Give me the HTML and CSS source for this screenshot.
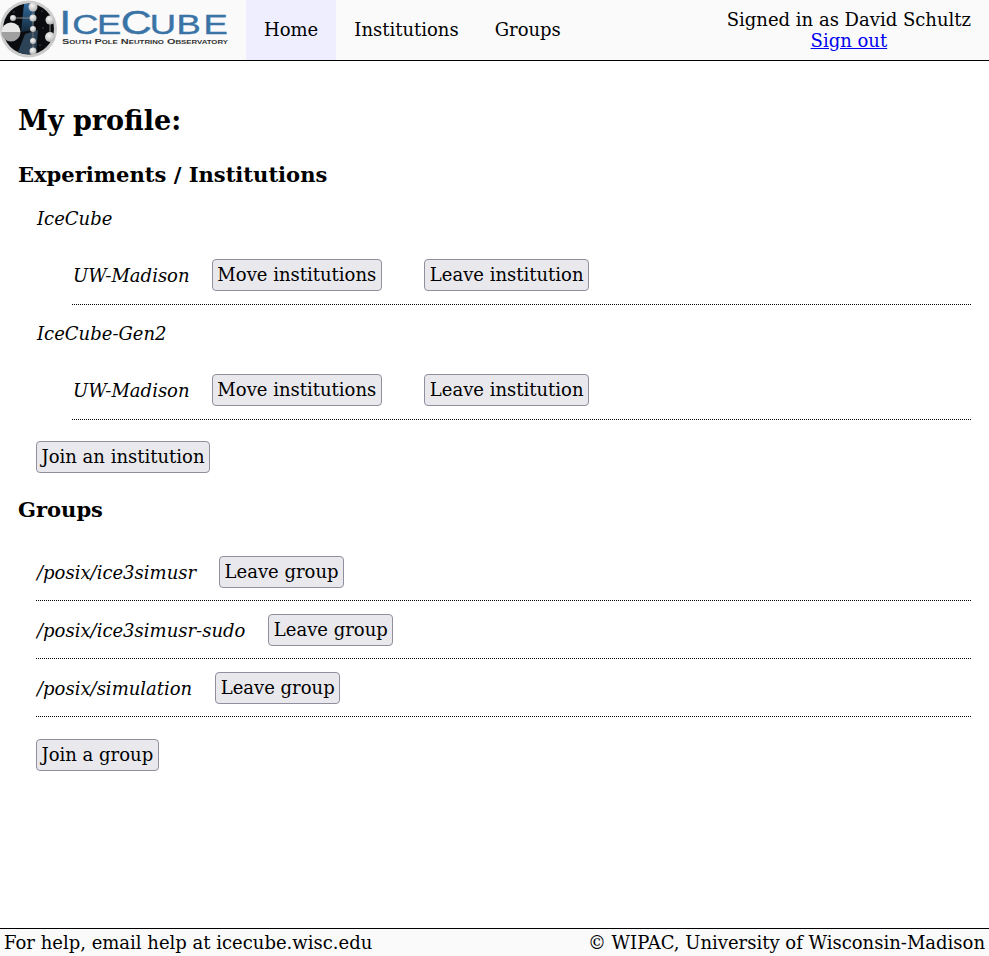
FILE: index.html
```html
<!DOCTYPE html>
<html lang="en">
<head>
    <meta charset="UTF-8">
    <meta name="viewport" content="width=device-width, initial-scale=1.0">
    <title>My profile</title>
    <link rel="stylesheet" href="styles.css">
</head>
<body>
    <header class="header">
        <div class="logo">
            <svg width="230" height="60" viewBox="0 0 230 60">
                <defs>
                    <radialGradient id="ball" cx="40%" cy="35%" r="70%">
                        <stop offset="0" stop-color="#f6f6f6"/>
                        <stop offset="1" stop-color="#b0b0b0"/>
                    </radialGradient>
                    <linearGradient id="streak" x1="0" y1="0" x2="0" y2="1">
                        <stop offset="0" stop-color="#2f6a9c"/>
                        <stop offset="1" stop-color="#14283a"/>
                    </linearGradient>
                </defs>
                <circle cx="28.500" cy="29" r="28.500" fill="#cccccc"/>
                <circle cx="28.500" cy="29" r="25.500" fill="#0a0c10"/>
                <path d="M24 4 L36 4 L33 30 L21 32Z" fill="url(#streak)"/>
                <path d="M18 52 L25 34 L38 30 L36 53 A25 25 0 0 1 18 52Z" fill="#2c4256"/>
                <g fill="#6f8aa3">
                    <circle cx="14" cy="12" r="0.600"/>
                    <circle cx="42" cy="11" r="0.600"/>
                    <circle cx="43" cy="28" r="0.600"/>
                    <circle cx="40" cy="45" r="0.600"/>
                    <circle cx="46" cy="47" r="0.600"/>
                    <circle cx="18" cy="26" r="0.600"/>
                </g>
                <path d="M33 4 L33 54" stroke="#777" stroke-width="1"/>
                <path d="M13 18 L33 18 M50 20 L50 37" stroke="#888" stroke-width="1"/>
                <circle cx="33" cy="7" r="4.500" fill="url(#ball)"/>
                <circle cx="33" cy="18" r="3.500" fill="url(#ball)"/>
                <circle cx="33" cy="29" r="3" fill="url(#ball)"/>
                <circle cx="33" cy="41" r="3" fill="url(#ball)"/>
                <circle cx="33" cy="51" r="3.500" fill="url(#ball)"/>
                <circle cx="50" cy="20" r="4.500" fill="url(#ball)"/>
                <circle cx="50" cy="37" r="5" fill="url(#ball)"/>
                <circle cx="13" cy="18" r="3" fill="url(#ball)"/>
                <path d="M1.500 32 A9.500 9.500 0 0 1 20.500 32Z" fill="#e8e8e8"/>
                <path d="M1.500 32 A9.500 9.500 0 0 0 20.500 32Z" fill="#a0a0a0"/>
                <g transform="scale(1.3 1)">
                    <text class="logo-title" x="45.500 55.500 74.600 92.900 115.200 135.800 156.500" y="34"><tspan class="logo-cap">I</tspan>CE<tspan class="logo-cap">C</tspan>UBE</text>
                </g>
                <text class="logo-sub" x="62" y="44" textLength="166" lengthAdjust="spacingAndGlyphs">South Pole Neutrino Observatory</text>
            </svg>
        </div>
        <nav class="nav">
            <a class="nav-item active" href="#">Home</a>
            <a class="nav-item" href="#">Institutions</a>
            <a class="nav-item" href="#">Groups</a>
        </nav>
        <div class="account">
            <div>Signed in as David Schultz</div>
            <a href="#">Sign out</a>
        </div>
    </header>

    <main class="content">
        <h1>My profile:</h1>

        <h2>Experiments / Institutions</h2>
        <div class="experiment">
            <div class="experiment-name">IceCube</div>
            <div class="row inst-row">
                <span class="name">UW-Madison</span>
                <button class="button">Move institutions</button>
                <button class="button leave">Leave institution</button>
            </div>
        </div>
        <div class="experiment">
            <div class="experiment-name">IceCube-Gen2</div>
            <div class="row inst-row">
                <span class="name">UW-Madison</span>
                <button class="button">Move institutions</button>
                <button class="button leave">Leave institution</button>
            </div>
        </div>
        <div class="join"><button class="button">Join an institution</button></div>

        <h2 class="groups-title">Groups</h2>
        <div class="groups">
            <div class="row">
                <span class="name">/posix/ice3simusr</span>
                <button class="button">Leave group</button>
            </div>
            <div class="row">
                <span class="name">/posix/ice3simusr-sudo</span>
                <button class="button">Leave group</button>
            </div>
            <div class="row">
                <span class="name">/posix/simulation</span>
                <button class="button">Leave group</button>
            </div>
        </div>
        <div class="join join-group"><button class="button">Join a group</button></div>
    </main>

    <footer class="footer">
        <span>For help, email help at icecube.wisc.edu</span>
        <span>© WIPAC, University of Wisconsin-Madison</span>
    </footer>
</body>
</html>
```

FILE: styles.css
```css
html, body {
    height: 100%;
}
body {
    margin: 0;
    font-family: "DejaVu Serif", serif;
    font-size: 18px;
    line-height: 23px;
    color: #000;
    background: white;
    display: flex;
    flex-direction: column;
}
.header {
    display: flex;
    height: 60px;
    flex-shrink: 0;
    background: #fafafa;
    border-bottom: 1px solid black;
}
.logo {
    width: 246px;
    height: 60px;
}
.logo svg {
    display: block;
}
.logo-title {
    font-family: "Liberation Sans", sans-serif;
    font-size: 28px;
    fill: #3a74a6;
    stroke: #3a74a6;
    stroke-width: 0.4px;
}
.logo-cap {
    font-size: 33px;
}
.logo-sub {
    font-family: "Liberation Sans", sans-serif;
    font-size: 7px;
    font-variant: small-caps;
    font-weight: bold;
    fill: #333;
}
.nav {
    display: flex;
}
.nav-item {
    display: block;
    padding: 18px;
    color: #000;
    text-decoration: none;
}
.nav-item.active {
    background: #eeeeff;
}
.account {
    margin-left: auto;
    padding: 10px 18px 0 0;
    text-align: center;
    line-height: 20px;
}
.account a {
    display: block;
    margin-top: 1px;
    color: #0000ee;
}
.content {
    flex: 1;
    padding: 0 18px;
}
h1 {
    font-size: 27px;
    line-height: 34px;
    margin: 43px 0 0;
}
h2 {
    font-size: 21.06px;
    line-height: 26px;
    margin: 24px 0 0;
}
.experiment {
    padding-left: 18px;
    font-style: italic;
}
.experiment-name {
    padding: 19px 0 17px 1px;
    line-height: 23px;
}
.experiment + .experiment .experiment-name {
    padding-top: 17px;
}
.row {
    display: flex;
    align-items: center;
    gap: 23px;
    padding: 13px 0 12px;
    border-bottom: 1px dotted black;
}
.inst-row {
    padding: 12px 0 13px;
    margin-left: 36px;
    gap: 22px;
}
.name {
    padding-left: 1px;
    font-style: italic;
}
.button {
    font-family: inherit;
    font-size: 18px;
    line-height: 23px;
    height: 32px;
    padding: 0 4.5px 2px;
    color: #000;
    background: #e9e9ed;
    border: 1px solid #8f8f9d;
    border-radius: 4px;
    font-style: normal;
}
.inst-row .button {
    padding: 0 4.8px 2px;
}
.leave {
    margin-left: 20px;
}
.join {
    margin: 21px 0 0 18px;
}
.join-group {
    margin-top: 22px;
}
.groups {
    margin: 20px 0 0 18px;
}
.footer {
    display: flex;
    justify-content: space-between;
    flex-shrink: 0;
    height: 26px;
    padding: 1px 4px 0;
    line-height: 26px;
    background: #fafafa;
    border-top: 1px solid black;
}
```
